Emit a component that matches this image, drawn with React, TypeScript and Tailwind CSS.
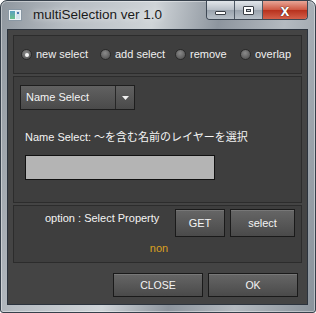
const FONT = { fontFamily: '"Liberation Sans", "Noto Sans CJK JP", sans-serif' };

function Radio({ label, checked, w }: { label: string; checked?: boolean; w: string }) {
  return (
    <div className={`flex items-center gap-[4px] ${w}`}>
      <div className="flex h-[11px] w-[11px] items-center justify-center rounded-full border border-[#2a2a2a] bg-[radial-gradient(circle_at_45%_35%,#8a8a8a_0%,#666666_55%,#4a4a4a_100%)]">
        {checked && <div className="h-[4px] w-[4px] rounded-full bg-[#f6f6f6]" />}
      </div>
      <span className="text-[11px] leading-[13px] text-[#f0f0f0]">{label}</span>
    </div>
  );
}

function Btn({ label, w, h, size }: { label: string; w: string; h: string; size: string }) {
  return (
    <div
      className={`flex items-center justify-center border border-[#1a1a1a] bg-[linear-gradient(#666666,#4a4a4a)] shadow-[inset_0_1px_0_rgba(255,255,255,0.12)] ${w} ${h}`}
    >
      <span className={`${size} leading-[13px] text-[#f4f4f4]`}>{label}</span>
    </div>
  );
}

export default function App() {
  return (
    <div className="h-[313px] w-[316px] overflow-hidden" style={FONT}>
      <div className="flex h-full w-full flex-col rounded-t-[7px] rounded-b-[3px] border border-[#36404b] bg-[linear-gradient(100deg,#8e969e_0%,#b6bcc2_18%,#cfd4d8_42%,#8d959e_60%,#b4bac0_78%,#89929b_100%)] shadow-[inset_0_0_0_1px_rgba(255,255,255,0.4)]">
        {/* title bar */}
        <div className="flex h-[28px] items-start">
          <svg className="ml-[7px] mt-[8px]" width="14" height="12" viewBox="0 0 14 12">
            <defs>
              <linearGradient id="ig" x1="0" y1="0" x2="0" y2="1">
                <stop offset="0" stopColor="#5aa0c0" />
                <stop offset="1" stopColor="#6cc08a" />
              </linearGradient>
            </defs>
            <rect x="0.5" y="0.5" width="13" height="11" fill="#eef3f6" stroke="#8a98a4" />
            <rect x="2" y="2" width="5" height="8" fill="url(#ig)" />
            <rect x="8" y="2" width="4" height="8" fill="#d6e4ec" />
            <rect x="9" y="3" width="2" height="2" fill="#4a78b0" />
          </svg>
          <span className="ml-[11px] mt-[5px] text-[13.5px] leading-[17px] text-[#1a1a1a] [text-shadow:0_0_6px_rgba(255,255,255,0.9)]">
            multiSelection ver 1.0
          </span>
          <div className="ml-auto mr-[7px] flex h-[19px] overflow-hidden rounded-b-[4px] border border-t-0 border-[#3e4854]">
            <div className="flex w-[28px] items-center justify-center border-r border-[#4e5864] bg-[linear-gradient(#e2e6ea,#b7bec6_50%,#9aa3ad_51%,#b8c0c8)]">
              <div className="mt-[5px] h-[4px] w-[11px] rounded-[1px] border border-[#3a3f46] bg-white" />
            </div>
            <div className="flex w-[28px] items-center justify-center border-r border-[#4e5864] bg-[linear-gradient(#e2e6ea,#b7bec6_50%,#9aa3ad_51%,#b8c0c8)]">
              <div className="flex h-[9px] w-[11px] items-center justify-center rounded-[1px] border border-[#3a3f46] bg-white">
                <div className="h-[3px] w-[5px] border border-[#3a3f46] bg-[#c8ced4]" />
              </div>
            </div>
            <div className="flex w-[44px] items-center justify-center bg-[linear-gradient(#e8a697,#cf5a45_48%,#b8321e_52%,#d4604a)]">
              <span className="text-[16px] font-bold leading-[15px] text-white [text-shadow:0_0_1px_#3a1a14,0_0_1px_#3a1a14]">
                x
              </span>
            </div>
          </div>
        </div>

        {/* client area */}
        <div className="mb-[7px] ml-[6px] mr-[7px] flex flex-1 flex-col border border-[#2b333d] bg-[#444444] px-[5px] pt-[5px]">
          {/* panel 1 */}
          <div className="flex h-[39px] items-center border border-[#2c2c2c] bg-[#3e3e3e] pl-[7px]">
            <Radio label="new select" checked w="w-[79px]" />
            <Radio label="add select" w="w-[75px]" />
            <Radio label="remove" w="w-[65px]" />
            <Radio label="overlap" w="w-auto" />
          </div>

          {/* panel 2 */}
          <div className="mt-[2px] flex h-[127px] flex-col border border-[#2c2c2c] bg-[#3e3e3e]">
            <div className="ml-[6px] mt-[8px] flex h-[25px] w-[115px] border border-[#1e1e1e] bg-[linear-gradient(#616161,#4a4a4a)]">
              <div className="flex flex-1 items-center pl-[5px]">
                <span className="text-[11px] leading-[13px] text-[#f4f4f4]">Name Select</span>
              </div>
              <div className="flex w-[19px] items-center justify-center border-l border-[#262626]">
                <svg width="7" height="4" viewBox="0 0 7 4">
                  <path d="M0 0 H7 L3.5 4 Z" fill="#f0f0f0" />
                </svg>
              </div>
            </div>
            <span className="ml-[11px] mt-[21px] text-[11px] leading-[13px] text-[#f4f4f4]">
              Name Select: ～を含む名前のレイヤーを選択
            </span>
            <div className="ml-[11px] mt-[11px] h-[25px] w-[190px] border border-[#111111] bg-[#b4b4b4]" />
          </div>

          {/* panel 3 */}
          <div className="mt-[2px] flex h-[58px] flex-col border border-[#2c2c2c] bg-[#3e3e3e]">
            <div className="mt-[3px] flex items-start pl-[31px] pr-[6px]">
              <span className="mt-[3px] text-[11px] leading-[13px] text-[#f4f4f4]">option : Select Property</span>
              <div className="ml-auto flex gap-[5px]">
                <Btn label="GET" w="w-[50px]" h="h-[28px]" size="text-[11px]" />
                <Btn label="select" w="w-[65px]" h="h-[28px]" size="text-[11px]" />
              </div>
            </div>
            <span className="ml-[3px] mt-[5px] text-center text-[11px] leading-[13px] text-[#dca021]">non</span>
          </div>

          {/* bottom buttons */}
          <div className="mt-[10px] flex justify-end gap-[5px] pr-[4px]">
            <Btn label="CLOSE" w="w-[90px]" h="h-[24px]" size="text-[10.5px]" />
            <Btn label="OK" w="w-[90px]" h="h-[24px]" size="text-[10.5px]" />
          </div>
        </div>
      </div>
    </div>
  );
}
